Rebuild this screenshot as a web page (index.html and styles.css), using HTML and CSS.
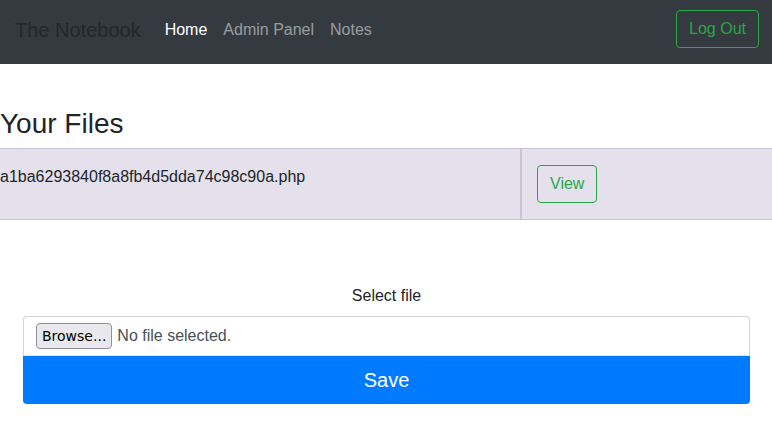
FILE: index.html
```html
<!DOCTYPE html>
<html lang="en">
<head>
<meta charset="utf-8">
<title>The Notebook</title>
<link rel="stylesheet" href="styles.css">
</head>
<body>
<nav class="navbar">
  <a class="brand" href="#">The Notebook</a>
  <ul class="nav">
    <li><a class="nav-link active" href="#">Home</a></li>
    <li><a class="nav-link" href="#">Admin Panel</a></li>
    <li><a class="nav-link" href="#">Notes</a></li>
  </ul>
  <a class="btn btn-outline" href="#">Log Out</a>
</nav>
<main class="content">
  <h3 class="title">Your Files</h3>
  <table class="files">
    <tr>
      <td class="name-cell">a1ba6293840f8a8fb4d5dda74c98c90a.php</td>
      <td class="action-cell"><a class="btn btn-outline" href="#">View</a></td>
    </tr>
  </table>
  <form class="upload">
    <div class="label">Select file</div>
    <div class="file-input">
      <span class="browse">Browse...</span>
      <span class="file-status">No file selected.</span>
    </div>
    <button type="button" class="save">Save</button>
  </form>
</main>
</body>
</html>
```
FILE: styles.css
```css
* { box-sizing: border-box; }
html, body { margin: 0; padding: 0; }
body {
  font-family: "Liberation Sans", Arial, sans-serif;
  font-size: 16px;
  line-height: 1.5;
  color: #212529;
  background: #fff;
}
a { text-decoration: none; }

.navbar {
  height: 64px;
  background: #343a40;
  display: flex;
  align-items: flex-start;
  padding: 10px 13px 0 15px;
}
.brand {
  font-size: 20px;
  line-height: 38px;
  padding-top: 1px;
  color: #23272b;
  margin-right: 16px;
}
.nav {
  list-style: none;
  margin: 0;
  padding: 0;
  display: flex;
  flex: 1;
}
.nav-link {
  display: block;
  padding: 8px 8px 6px;
  color: rgba(255,255,255,.5);
}
.nav-link.active { color: #fff; }

.btn {
  display: inline-block;
  font-size: 16px;
  line-height: 24px;
  padding: 6px 12px;
  border-radius: 4px;
}
.btn-outline {
  color: #28a745;
  border: 1px solid #28a745;
}

.title {
  font-size: 28px;
  font-weight: 500;
  line-height: 1.2;
  margin: 43px 0 7px;
}

.files {
  width: 100%;
  table-layout: fixed;
  border-collapse: separate;
  border-spacing: 0;
  background: #e4e1ec;
}
.files td {
  padding: 16px 0;
  vertical-align: top;
  border-top: 1px solid #c8c3d7;
  border-bottom: 1px solid #c8c3d7;
}
.name-cell {
  width: 522px;
  border-right: 2px solid #c8c3d7;
}
.files .action-cell {
  padding-left: 15px;
}

.upload {
  margin: 64px 22px 0 23px;
}
.label {
  text-align: center;
  margin-bottom: 8px;
}
.file-input {
  height: 40px;
  border: 1px solid #ced4da;
  border-bottom-color: #e3e7eb;
  border-radius: 4px 4px 0 0;
  display: flex;
  align-items: center;
  padding-left: 12px;
  padding-top: 1px;
}
.browse {
  font-family: "DejaVu Sans", sans-serif;
  font-size: 14px;
  line-height: 24px;
  height: 26px;
  padding: 0 5px;
  background: #e9e9ed;
  border: 1px solid #8f8f9d;
  border-radius: 4px;
  color: #000;
}
.file-status {
  margin-left: 5px;
  color: #495057;
}
.save {
  display: block;
  width: 100%;
  height: 48px;
  border: 0;
  border-radius: 0 0 4px 4px;
  background: #007bff;
  color: #fff;
  font-family: "Liberation Sans", Arial, sans-serif;
  font-size: 20px;
  line-height: 30px;
}
```
